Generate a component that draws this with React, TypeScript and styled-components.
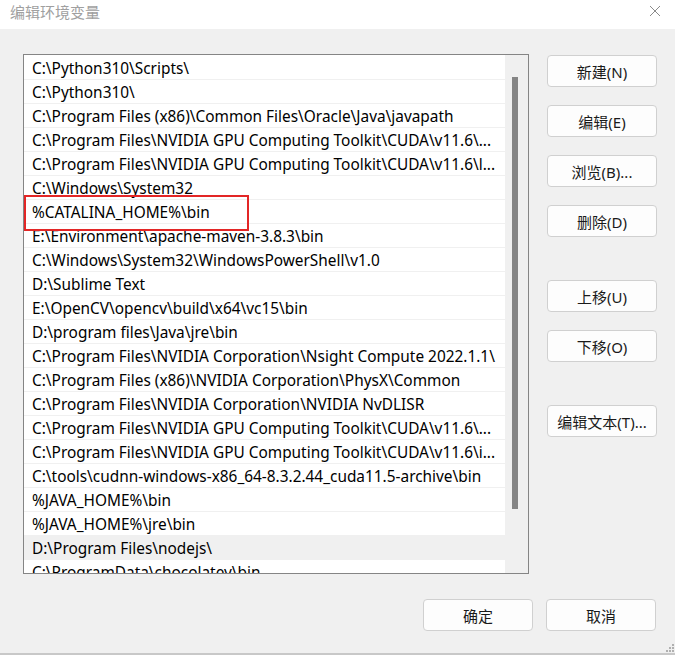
import React from "react";
import styled, { createGlobalStyle } from "styled-components";

const Global = createGlobalStyle`
  html, body { margin: 0; padding: 0; background: #f0f0f0; }
  body { font-family: "Noto Sans", "Noto Sans CJK SC", sans-serif; }
  * { box-sizing: border-box; }
`;

const Window = styled.div`
  width: 675px;
  height: 655px;
  background: #f0f0f0;
  display: flex;
  flex-direction: column;
  border-bottom: 2px solid #c8c8c8;
  position: relative;
  overflow: hidden;
`;

const TitleBar = styled.div`
  height: 29px;
  background: #ffffff;
  display: flex;
  align-items: center;
  justify-content: space-between;
  padding: 0 14px 0 10px;
`;

const Title = styled.span`
  font-family: "Noto Sans CJK SC", sans-serif;
  font-size: 15px;
  color: #a0a0a0;
  line-height: 20px;
  margin-top: -6px;
`;

const CloseIcon = styled.svg`
  width: 12px;
  height: 12px;
  margin-top: -8px;
`;

const Body = styled.div`
  flex: 1;
  display: flex;
  flex-direction: column;
  padding: 25px 18px 0 23px;
`;

const Main = styled.div`
  display: flex;
  gap: 18px;
`;

const ListBox = styled.div`
  width: 506px;
  height: 520px;
  border: 1px solid #858585;
  background: #ffffff;
  display: flex;
  overflow: hidden;
`;

const Rows = styled.div`
  flex: 1;
  padding-top: 1px;
  overflow: hidden;
`;

const Row = styled.div<{ $selected?: boolean; $marked?: boolean }>`
  height: 24px;
  line-height: 24px;
  padding: 1px 0 0 8px;
  border-bottom: 1px solid #f0f0f0;
  font-size: 15.4px;
  color: #000000;
  white-space: nowrap;
  overflow: visible;
  position: relative;
  z-index: ${(p) => (p.$marked ? 2 : 1)};
  background: ${(p) => (p.$selected ? "#f0f0f0" : "#ffffff")};
  ${(p) =>
    p.$marked &&
    `
    &::after {
      content: "";
      position: absolute;
      left: 0;
      top: -5px;
      width: 221px;
      height: 32px;
      border: 2px solid #e32626;
      pointer-events: none;
    }
  `}
`;

const ScrollTrack = styled.div`
  width: 23px;
  background: #f0f0f0;
  position: relative;
  flex-shrink: 0;
`;

const Thumb = styled.div`
  position: absolute;
  left: 7px;
  top: 22px;
  width: 6px;
  height: 432px;
  background: #858585;
`;

const ButtonColumn = styled.div`
  display: flex;
  flex-direction: column;
  gap: 18px;
  padding-top: 1px;
`;

const Button = styled.button<{ $extraTop?: boolean }>`
  width: 110px;
  height: 32px;
  background: #fdfdfd;
  border: 1px solid #d0d0d0;
  border-radius: 4px;
  font-family: "Noto Sans", "Noto Sans CJK SC", sans-serif;
  font-size: 15px;
  color: #1a1a1a;
  padding: 0;
  margin-top: ${(p) => (p.$extraTop ? "25px" : "0")};
  display: flex;
  align-items: center;
  justify-content: center;
`;

const Footer = styled.div`
  display: flex;
  justify-content: flex-end;
  gap: 13px;
  padding-top: 25px;
  padding-right: 1px;
`;

const Grip = styled.svg`
  position: absolute;
  right: 1px;
  bottom: 1px;
  width: 10px;
  height: 10px;
`;

const items = [
  "C:\\Python310\\Scripts\\",
  "C:\\Python310\\",
  "C:\\Program Files (x86)\\Common Files\\Oracle\\Java\\javapath",
  "C:\\Program Files\\NVIDIA GPU Computing Toolkit\\CUDA\\v11.6\\...",
  "C:\\Program Files\\NVIDIA GPU Computing Toolkit\\CUDA\\v11.6\\l...",
  "C:\\Windows\\System32",
  "%CATALINA_HOME%\\bin",
  "E:\\Environment\\apache-maven-3.8.3\\bin",
  "C:\\Windows\\System32\\WindowsPowerShell\\v1.0",
  "D:\\Sublime Text",
  "E:\\OpenCV\\opencv\\build\\x64\\vc15\\bin",
  "D:\\program files\\Java\\jre\\bin",
  "C:\\Program Files\\NVIDIA Corporation\\Nsight Compute 2022.1.1\\",
  "C:\\Program Files (x86)\\NVIDIA Corporation\\PhysX\\Common",
  "C:\\Program Files\\NVIDIA Corporation\\NVIDIA NvDLISR",
  "C:\\Program Files\\NVIDIA GPU Computing Toolkit\\CUDA\\v11.6\\...",
  "C:\\Program Files\\NVIDIA GPU Computing Toolkit\\CUDA\\v11.6\\i...",
  "C:\\tools\\cudnn-windows-x86_64-8.3.2.44_cuda11.5-archive\\bin",
  "%JAVA_HOME%\\bin",
  "%JAVA_HOME%\\jre\\bin",
  "D:\\Program Files\\nodejs\\",
  "C:\\ProgramData\\chocolatey\\bin",
];

export default function App() {
  return (
    <Window>
      <Global />
      <TitleBar>
        <Title>编辑环境变量</Title>
        <CloseIcon viewBox="0 0 12 12">
          <path d="M1 1 L11 11 M11 1 L1 11" stroke="#8a8a8a" strokeWidth="1" fill="none" />
        </CloseIcon>
      </TitleBar>
      <Body>
        <Main>
          <ListBox>
            <Rows>
              {items.map((t, i) => (
                <Row key={i} $selected={i === 20} $marked={i === 6}>
                  {t}
                </Row>
              ))}
            </Rows>
            <ScrollTrack>
              <Thumb />
            </ScrollTrack>
          </ListBox>
          <ButtonColumn>
            <Button>新建(N)</Button>
            <Button>编辑(E)</Button>
            <Button>浏览(B)...</Button>
            <Button>删除(D)</Button>
            <Button $extraTop>上移(U)</Button>
            <Button>下移(O)</Button>
            <Button $extraTop>编辑文本(T)...</Button>
          </ButtonColumn>
        </Main>
        <Footer>
          <Button>确定</Button>
          <Button>取消</Button>
        </Footer>
      </Body>
      <Grip viewBox="0 0 10 10">
        <rect x="8" y="2" width="2" height="2" fill="#b0b0b0" />
        <rect x="5" y="5" width="2" height="2" fill="#b0b0b0" />
        <rect x="8" y="5" width="2" height="2" fill="#b0b0b0" />
        <rect x="2" y="8" width="2" height="2" fill="#b0b0b0" />
        <rect x="5" y="8" width="2" height="2" fill="#b0b0b0" />
        <rect x="8" y="8" width="2" height="2" fill="#b0b0b0" />
      </Grip>
    </Window>
  );
}
